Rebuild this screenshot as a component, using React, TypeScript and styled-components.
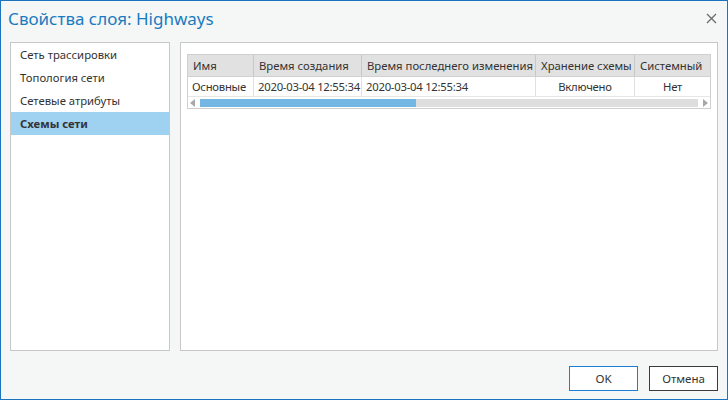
import React from 'react';
import styled, {createGlobalStyle} from 'styled-components';

const GlobalStyle = createGlobalStyle`
  html, body {
    margin: 0;
    padding: 0;
    background: #f5f7f7;
  }
  * {
    box-sizing: border-box;
  }
`;

const Window = styled.div`
  width: 728px;
  height: 400px;
  border: 1px solid #1b74bd;
  background: #f5f7f7;
  display: flex;
  flex-direction: column;
  font-family: 'Noto Sans', 'Open Sans', sans-serif;
  font-size: 11.3px;
  color: #333;
`;

const TitleBar = styled.div`
  height: 41px;
  display: flex;
  align-items: flex-start;
  justify-content: space-between;
  padding: 6px 10px 0 7px;
`;

const Title = styled.div`
  font-size: 17px;
  color: #1a7bc0;
`;

const CloseButton = styled.div`
  margin-top: 5px;
  width: 12px;
  height: 12px;
  display: flex;
  align-items: center;
  justify-content: center;
`;

const Body = styled.div`
  display: flex;
  gap: 10px;
  padding: 0 9px;
  height: 309px;
`;

const Panel = styled.div<{$width: number}>`
  width: ${p => p.$width}px;
  background: #fff;
  border: 1px solid #c8c8c8;
`;

const NavItem = styled.div<{$active?: boolean}>`
  height: 23px;
  line-height: 23px;
  padding-left: 9px;
  background: ${p => (p.$active ? '#9fd1f1' : 'transparent')};
  font-weight: ${p => (p.$active ? 700 : 400)};
  white-space: nowrap;
`;

const Content = styled(Panel)`
  padding: 11px 6px 0 6px;
`;

const Table = styled.div`
  border: 1px solid #cfcfcf;
`;

const Row = styled.div<{$header?: boolean}>`
  display: grid;
  grid-template-columns: 66px 108px 174px 99px 1fr;
  height: ${p => (p.$header ? 22 : 20)}px;
  background: ${p => (p.$header ? '#e1e1e1' : '#fff')};
  border-bottom: 1px solid ${p => (p.$header ? '#d0d0d0' : '#e6e6e6')};
  letter-spacing: ${p => (p.$header ? '0' : '-0.25px')};
`;

const Cell = styled.div<{$center?: boolean}>`
  padding: 0 4px;
  display: flex;
  align-items: center;
  justify-content: ${p => (p.$center ? 'center' : 'flex-start')};
  border-right: 1px solid #e0e0e0;
  white-space: nowrap;
  overflow: hidden;
  &:last-child {
    border-right: none;
  }
`;

const HeadCell = styled(Cell)`
  padding: 0 5px;
  border-right-color: #c8c8c8;
`;

const ScrollBar = styled.div`
  height: 11px;
  display: flex;
  align-items: center;
  gap: 3px;
  padding: 0 2px;
`;

const Track = styled.div`
  flex: 1;
  height: 8px;
  background: #dedede;
  position: relative;
`;

const Thumb = styled.div`
  position: absolute;
  left: 0;
  top: 0;
  bottom: 0;
  background: #74b7e4;
`;

const Arrow = styled.div<{$dir: 'left' | 'right'}>`
  width: 0;
  height: 0;
  border-top: 4px solid transparent;
  border-bottom: 4px solid transparent;
  ${p =>
    p.$dir === 'left'
      ? 'border-right: 5px solid #a8a8a8; margin-right: 2px;'
      : 'border-left: 5px solid #a8a8a8; margin-left: 2px;'}
`;

const Footer = styled.div`
  flex: 1;
  display: flex;
  justify-content: flex-end;
  align-items: flex-start;
  gap: 11px;
  padding: 15px 9px 0 0;
`;

const Button = styled.div<{$primary?: boolean}>`
  width: 69px;
  height: 25px;
  display: flex;
  align-items: center;
  justify-content: center;
  background: #fff;
  border: 1px solid ${p => (p.$primary ? '#1a7fd4' : '#3c3c3c')};
  font-size: 11.5px;
  color: #333;
`;

const navItems = ['Сеть трассировки', 'Топология сети', 'Сетевые атрибуты', 'Схемы сети'];

const columns = ['Имя', 'Время создания', 'Время последнего изменения', 'Хранение схемы', 'Системный'];

const row = {
  name: 'Основные',
  created: '2020-03-04 12:55:34',
  modified: '2020-03-04 12:55:34',
  storage: 'Включено',
  system: 'Нет',
};

const App: React.FC = () => {
  return (
    <>
      <GlobalStyle />
      <Window>
        <TitleBar>
          <Title>Свойства слоя: Highways</Title>
          <CloseButton>
            <svg width="11" height="11" viewBox="0 0 11 11">
              <path d="M1 1L10 10M10 1L1 10" stroke="#6b6b6b" strokeWidth="1.3" />
            </svg>
          </CloseButton>
        </TitleBar>
        <Body>
          <Panel $width={160}>
            {navItems.map((item, i) => (
              <NavItem key={item} $active={i === navItems.length - 1}>
                {item}
              </NavItem>
            ))}
          </Panel>
          <Content $width={538}>
            <Table>
              <Row $header>
                {columns.map(c => (
                  <HeadCell key={c}>{c}</HeadCell>
                ))}
              </Row>
              <Row>
                <Cell>{row.name}</Cell>
                <Cell>{row.created}</Cell>
                <Cell>{row.modified}</Cell>
                <Cell $center>{row.storage}</Cell>
                <Cell $center>{row.system}</Cell>
              </Row>
              <ScrollBar>
                <Arrow $dir="left" />
                <Track>
                  <Thumb style={{width: 216}} />
                </Track>
                <Arrow $dir="right" />
              </ScrollBar>
            </Table>
          </Content>
        </Body>
        <Footer>
          <Button $primary>OK</Button>
          <Button>Отмена</Button>
        </Footer>
      </Window>
    </>
  );
};

export default App;
